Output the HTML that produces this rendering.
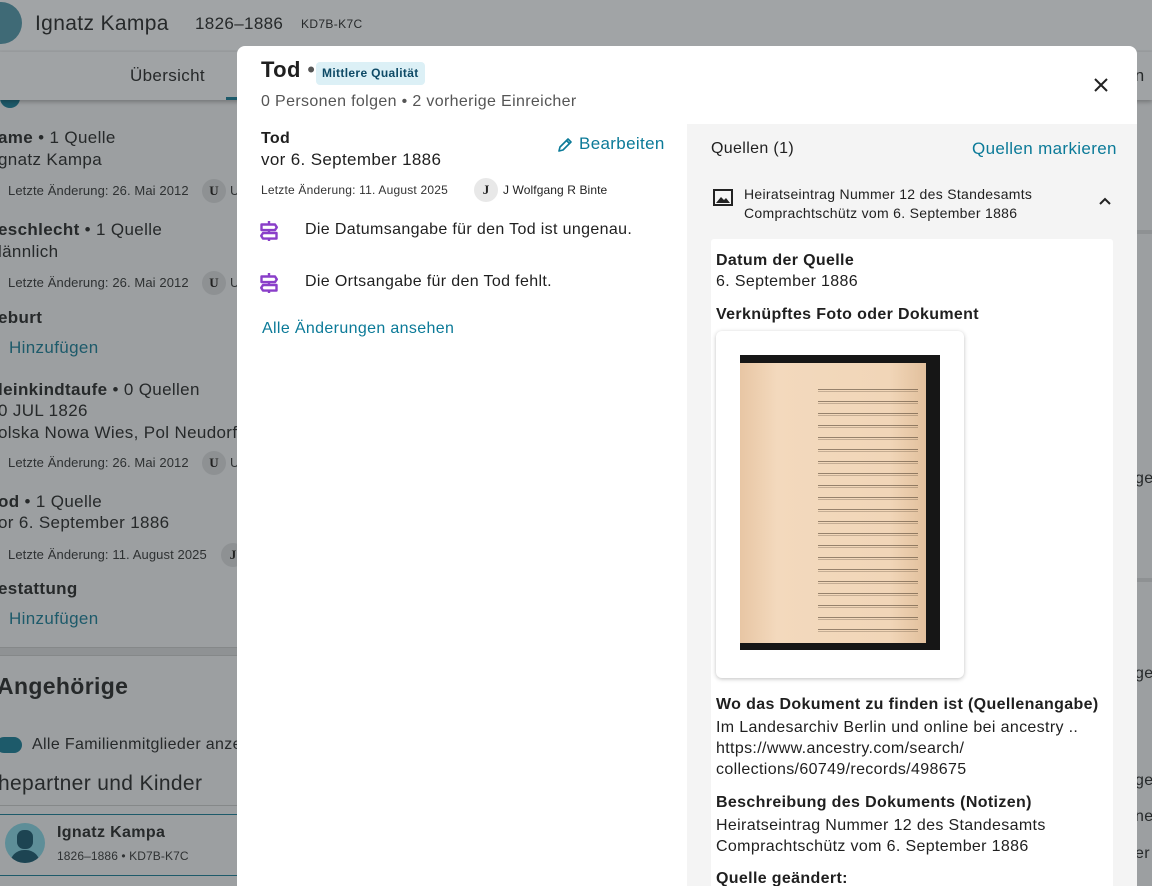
<!DOCTYPE html>
<html><head><meta charset="utf-8"><style>
*{margin:0;padding:0;box-sizing:border-box}
body{width:1152px;height:881px;overflow:hidden;background:#9c9fa1;font-family:"Liberation Sans","DejaVu Sans",sans-serif;color:#262829;position:relative;letter-spacing:.35px}
.a{position:absolute;white-space:nowrap}
.bg{color:#26292a}
.lk{color:#1d5a6a}
.sm{font-size:13px;color:#2e3132;letter-spacing:.1px}
.b{font-weight:bold}
.av{position:absolute;width:24px;height:24px;border-radius:50%;background:#8e9193;font-family:"Liberation Serif",serif;font-weight:bold;font-size:13px;text-align:center;line-height:24px;color:#222;letter-spacing:0}
.m{position:absolute;left:237px;top:46px;width:900px;height:840px;background:#fff;border-radius:8px 8px 0 0;overflow:hidden}
.t{color:#1f1f1f}
.blue{color:#0b7a98}
</style></head><body>
<div style="position:absolute;left:0;top:0;width:1152px;height:50px;background:#a1a4a6"></div>
<div style="position:absolute;left:-20px;top:2px;width:42px;height:42px;border-radius:50%;background:#3f6a76"></div>
<div class="a bg" style="left:35px;top:12px;font-size:21px">Ignatz Kampa</div>
<div class="a bg" style="left:195px;top:14px;font-size:17px">1826–1886</div>
<div class="a bg" style="left:301px;top:17px;font-size:12px">KD7B-K7C</div>
<div style="position:absolute;left:0;top:88px;width:20px;height:20px;border-radius:50%;background:#1d5a6a"></div>
<div style="position:absolute;left:0;top:52px;width:1152px;height:48px;background:#a0a3a5;box-shadow:0 2px 4px rgba(0,0,0,.25)"></div>
<div class="a bg" style="left:130px;top:66px;font-size:17px">Übersicht</div>
<div style="position:absolute;left:226px;top:97px;width:12px;height:3px;background:#1d5a6a"></div>
<div class="a bg" style="left:1125px;top:66px;font-size:17px">an</div>
<div class="a bg" style="left:-2px;top:128px;font-size:17px"><span class="b">ame</span> • 1 Quelle</div>
<div class="a bg" style="left:-2px;top:150px;font-size:17px">gnatz Kampa</div>
<div class="a sm" style="left:8px;top:183px">Letzte Änderung: 26. Mai 2012</div><div class="av" style="left:202px;top:179px">U</div><div class="a sm" style="left:230px;top:183px">U</div>
<div class="a bg" style="left:-2px;top:220px;font-size:17px"><span class="b">eschlecht</span> • 1 Quelle</div>
<div class="a bg" style="left:-2px;top:242px;font-size:17px">lännlich</div>
<div class="a sm" style="left:8px;top:275px">Letzte Änderung: 26. Mai 2012</div><div class="av" style="left:202px;top:271px">U</div><div class="a sm" style="left:230px;top:275px">U</div>
<div class="a bg b" style="left:-2px;top:308px;font-size:17px">eburt</div>
<div class="a lk" style="left:9px;top:338px;font-size:17px">Hinzufügen</div>
<div class="a bg" style="left:-2px;top:380px;font-size:17px"><span class="b">leinkindtaufe</span> • 0 Quellen</div>
<div class="a bg" style="left:-2px;top:401px;font-size:17px">0 JUL 1826</div>
<div class="a bg" style="left:-2px;top:423px;font-size:17px">olska Nowa Wies, Pol Neudorf, C</div>
<div class="a sm" style="left:8px;top:455px">Letzte Änderung: 26. Mai 2012</div><div class="av" style="left:202px;top:451px">U</div><div class="a sm" style="left:230px;top:455px">U</div>
<div class="a bg" style="left:-2px;top:492px;font-size:17px"><span class="b">od</span> • 1 Quelle</div>
<div class="a bg" style="left:-2px;top:513px;font-size:17px">or 6. September 1886</div>
<div class="a sm" style="left:8px;top:547px">Letzte Änderung: 11. August 2025</div><div class="av" style="left:221px;top:543px">J</div>
<div class="a bg b" style="left:-2px;top:579px;font-size:17px">estattung</div>
<div class="a lk" style="left:9px;top:609px;font-size:17px">Hinzufügen</div>
<div style="position:absolute;left:0;top:647px;width:240px;height:9px;background:#8f9294;border-top:1px solid #858889;border-bottom:1px solid #858889"></div>
<div class="a bg b" style="left:-3px;top:673px;font-size:23px">Angehörige</div>
<div style="position:absolute;left:-4px;top:737px;width:26px;height:16px;border-radius:8px;background:#1d5a6a"></div>
<div class="a bg" style="left:32px;top:736px;font-size:16px">Alle Familienmitglieder anze</div>
<div class="a bg" style="left:-2px;top:772px;font-size:21px">hepartner und Kinder</div>
<div style="position:absolute;left:0;top:805px;width:240px;height:1px;background:#858889"></div>
<div style="position:absolute;left:0;top:814px;width:240px;height:1px;background:#1d5a6a"></div>
<div style="position:absolute;left:5px;top:823px;width:40px;height:40px;border-radius:50%;background:#5e8e98;overflow:hidden"><div style="position:absolute;left:12px;top:7px;width:16px;height:19px;border-radius:7px;background:#1d4452"></div><div style="position:absolute;left:5px;top:27px;width:30px;height:18px;border-radius:14px 14px 0 0;background:#1d4452"></div></div>
<div class="a bg b" style="left:57px;top:824px;font-size:16px">Ignatz Kampa</div>
<div class="a sm" style="left:57px;top:849px;font-size:12px">1826–1886 • KD7B-K7C</div>
<div style="position:absolute;left:0;top:875px;width:240px;height:1px;background:#1d5a6a"></div>
<div style="position:absolute;left:1137px;top:230px;width:15px;height:4px;background:#8e9193"></div>
<div style="position:absolute;left:1137px;top:578px;width:15px;height:4px;background:#8e9193"></div>
<div class="a bg" style="left:1135px;top:470px;font-size:16px">ge</div>
<div class="a bg" style="left:1135px;top:665px;font-size:16px">ge</div>
<div class="a bg" style="left:1135px;top:772px;font-size:16px">ge</div>
<div class="a bg" style="left:1135px;top:808px;font-size:16px">ne</div>
<div class="a bg" style="left:1135px;top:845px;font-size:16px">er v</div>

<div class="m">
<div class="a t b" style="left:24px;top:11px;font-size:22px">Tod <span style="font-weight:normal;color:#555">•</span></div>
<div class="a" style="left:79px;top:16px;height:23px;padding:0 6px;background:#dcf0f6;border-radius:4px;font-size:12px;font-weight:bold;line-height:23px;color:#0e4a66">Mittlere Qualität</div>
<div class="a" style="left:24px;top:47px;font-size:16px;color:#555">0 Personen folgen • 2 vorherige Einreicher</div>
<svg style="position:absolute;left:856px;top:31px" width="16" height="16" viewBox="0 0 16 16"><path d="M2 2L14 14M14 2L2 14" stroke="#222" stroke-width="2"/></svg>

<div class="a t b" style="left:24px;top:84px;font-size:16px">Tod</div>
<div class="a t" style="left:24px;top:104px;font-size:17px">vor 6. September 1886</div>
<svg style="position:absolute;left:319px;top:91px" width="17" height="17" viewBox="0 0 17 17"><path d="M3 14l1-4L12 2l3 3-8 8z M10.5 3.5l3 3" fill="none" stroke="#0b7a98" stroke-width="1.6" stroke-linejoin="round"/></svg>
<div class="a blue" style="left:342px;top:88px;font-size:17px">Bearbeiten</div>
<div class="a" style="left:24px;top:137px;font-size:12px;color:#333;letter-spacing:.2px">Letzte Änderung: 11. August 2025</div>
<div class="av" style="left:237px;top:132px;background:#e8e8e8">J</div>
<div class="a" style="left:266px;top:137px;font-size:12px;color:#222;letter-spacing:.1px">J Wolfgang R Binte</div>
<svg style="position:absolute;left:22px;top:174px" width="20" height="22" viewBox="0 0 20 22"><path d="M10 1v3M10 10v3M10 19v2" stroke="#8a3fc9" stroke-width="2.4"/><path d="M2.5 4.5h13.5l1.8 2.8-1.8 2.8H2.5zM17.5 13H4l-1.8 2.8L4 18.6h13.5z" fill="none" stroke="#8a3fc9" stroke-width="2.4" stroke-linejoin="round"/></svg>
<div class="a t" style="left:68px;top:175px;font-size:16px">Die Datumsangabe für den Tod ist ungenau.</div>
<svg style="position:absolute;left:22px;top:226px" width="20" height="22" viewBox="0 0 20 22"><path d="M10 1v3M10 10v3M10 19v2" stroke="#8a3fc9" stroke-width="2.4"/><path d="M2.5 4.5h13.5l1.8 2.8-1.8 2.8H2.5zM17.5 13H4l-1.8 2.8L4 18.6h13.5z" fill="none" stroke="#8a3fc9" stroke-width="2.4" stroke-linejoin="round"/></svg>
<div class="a t" style="left:68px;top:227px;font-size:16px">Die Ortsangabe für den Tod fehlt.</div>
<div class="a blue" style="left:25px;top:274px;font-size:16px">Alle Änderungen ansehen</div>

<div style="position:absolute;left:450px;top:78px;width:450px;height:770px;background:#f4f4f4"></div>
<div class="a t" style="left:474px;top:94px;font-size:16px">Quellen (1)</div>
<div class="a blue" style="left:735px;top:93px;font-size:17px">Quellen markieren</div>
<svg style="position:absolute;left:476px;top:143px" width="20" height="17" viewBox="0 0 20 17"><rect x="1" y="1" width="18" height="15" fill="none" stroke="#222" stroke-width="2"/><path d="M3 14l5-6 3 3 2-2 4 5z" fill="#222"/></svg>
<div class="a t" style="left:507px;top:139px;font-size:14px;line-height:19px;letter-spacing:.3px">Heiratseintrag Nummer 12 des Standesamts<br>Comprachtschütz vom 6. September 1886</div>
<svg style="position:absolute;left:861px;top:150px" width="14" height="10" viewBox="0 0 14 10"><path d="M2 8l5-5 5 5" fill="none" stroke="#222" stroke-width="2"/></svg>
<div style="position:absolute;left:474px;top:193px;width:402px;height:660px;background:#fff;border-radius:3px"></div>
<div class="a t b" style="left:479px;top:206px;font-size:16px">Datum der Quelle</div>
<div class="a t" style="left:479px;top:227px;font-size:16px">6. September 1886</div>
<div class="a t b" style="left:479px;top:260px;font-size:16px">Verknüpftes Foto oder Dokument</div>
<div style="position:absolute;left:479px;top:285px;width:248px;height:347px;background:#fff;border-radius:6px;box-shadow:0 1px 4px rgba(0,0,0,.25)"></div>
<div style="position:absolute;left:503px;top:309px;width:200px;height:295px;background:#161616">
<div style="position:absolute;left:0;top:8px;width:186px;height:280px;background:linear-gradient(90deg,#e8c6a4,#f3d9bd 20%,#f1d6b8 80%,#e2c09d);overflow:hidden">
<div style="position:absolute;left:78px;top:20px;width:100px;height:250px;background:repeating-linear-gradient(180deg,transparent 0 6px,rgba(60,45,30,.5) 6px 7px,transparent 7px 8px,rgba(60,45,30,.25) 8px 9px,transparent 9px 12px)"></div>
</div></div>
<div class="a t b" style="left:479px;top:650px;font-size:16px">Wo das Dokument zu finden ist (Quellenangabe)</div>
<div class="a t" style="left:479px;top:671px;font-size:16px;line-height:21px">Im Landesarchiv Berlin und online bei ancestry ..<br>https://www.ancestry.com/search/<br>collections/60749/records/498675</div>
<div class="a t b" style="left:479px;top:748px;font-size:16px">Beschreibung des Dokuments (Notizen)</div>
<div class="a t" style="left:479px;top:769px;font-size:16px;line-height:21px">Heiratseintrag Nummer 12 des Standesamts<br>Comprachtschütz vom 6. September 1886</div>
<div class="a t b" style="left:479px;top:824px;font-size:16px">Quelle geändert:</div>
</div>
</body></html>
